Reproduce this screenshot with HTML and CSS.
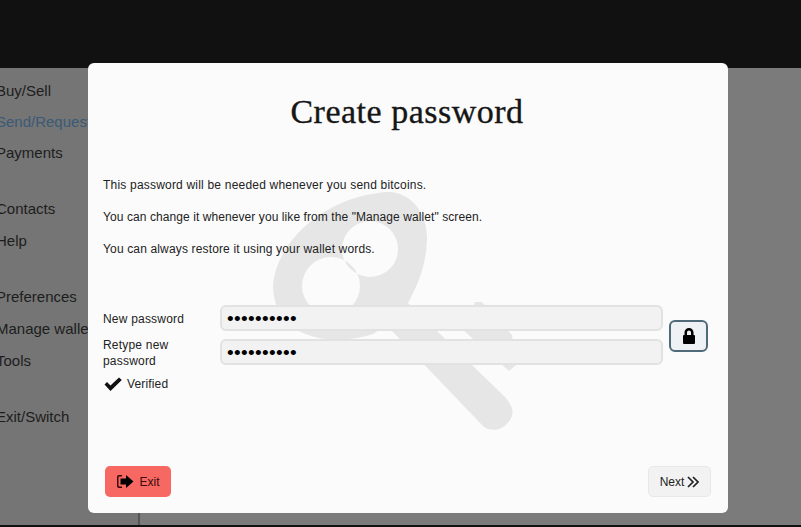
FILE: index.html
```html
<!DOCTYPE html>
<html lang="en">
<head>
<meta charset="utf-8">
<title>Create password</title>
<link rel="stylesheet" href="styles.css">
</head>
<body>
<header class="topbar"></header>
<div class="main">
  <nav class="sidebar">
    <div class="nav-group nav-group-first">
      <a class="nav-item">Buy/Sell</a>
      <a class="nav-item active">Send/Request</a>
      <a class="nav-item">Payments</a>
    </div>
    <div class="nav-group">
      <a class="nav-item">Contacts</a>
      <a class="nav-item">Help</a>
    </div>
    <div class="nav-group">
      <a class="nav-item">Preferences</a>
      <a class="nav-item">Manage wallet</a>
      <a class="nav-item">Tools</a>
    </div>
    <div class="nav-group">
      <a class="nav-item">Exit/Switch</a>
    </div>
  </nav>
</div>
<div class="bottom-line"></div>
<section class="modal">
  <svg class="watermark" viewBox="265 185 260 250" aria-hidden="true">
    <path fill="#e6e6e6" fill-rule="evenodd" d="M273 285C276 245 320 198 385 192C412 190 428 215 427 240C426 265 418 285 408 303L505 397C512 405 515 412 510 420C503 431 490 433 482 425L393 332L384 327L373 334C345 343 310 342 290 325C278 315 273 300 273 285ZM398 249a28 28 0 1 0-56 0a28 28 0 1 0 56 0ZM360 286a29 29 0 1 0-58 0a29 29 0 1 0 58 0Z"/>
    <path fill="#e6e6e6" d="M475 302L482 302L512 335L516 365L509 371L462 329Z"/>
  </svg>
  <h1 class="title">Create password</h1>
  <div class="intro">
    <p class="line-a">This password will be needed whenever you send bitcoins.</p>
    <p class="line-b">You can change it whenever you like from the "Manage wallet" screen.</p>
    <p>You can always restore it using your wallet words.</p>
  </div>
  <div class="form">
    <div class="fields">
      <div class="field">
        <label class="label">New password</label>
        <div class="input">••••••••••</div>
      </div>
      <div class="field">
        <label class="label">Retype new password</label>
        <div class="input">••••••••••</div>
      </div>
    </div>
    <button class="lock" type="button" aria-label="Lock">
      <svg width="14" height="16" viewBox="0 0 14 16"><path fill="#000" fill-rule="evenodd" d="M2.500 7V4.500a4.500 4.500 0 0 1 9 0V7h.5q1 0 1 1v7q0 1-1 1H2q-1 0-1-1V8q0-1 1-1ZM5 7h4V4.500a2 2 0 0 0-4 0Z"/></svg>
    </button>
  </div>
  <div class="verified">
    <svg width="18" height="14" viewBox="0 0 18 14"><path fill="#111" d="M0.500 7.500L3 5L6.500 8.500L15 0.500L17.800 3L6.500 14Z"/></svg>
    <span>Verified</span>
  </div>
  <div class="actions">
    <button class="btn exit" type="button">
      <svg width="18" height="15" viewBox="0 0 18 15"><path fill="#3a0808" d="M6 1H3Q1 1 1 3V12Q1 14 3 14H6V12.500H3.500Q2.500 12.500 2.500 11.500V3.500Q2.500 2.500 3.500 2.500H6Z"/><path fill="#000" d="M4.500 4.500H10V1L17.500 7.500L10 14V10.500H4.500Z"/></svg>
      <span>Exit</span>
    </button>
    <button class="btn next" type="button">
      <span>Next</span>
      <svg width="12" height="12" viewBox="0 0 12 12"><path fill="none" stroke="#222" stroke-width="1.700" d="M1 1L6 6L1 11M6 1L11 6L6 11"/></svg>
    </button>
  </div>
</section>
</body>
</html>
```
FILE: styles.css
```css
* { box-sizing: border-box; }
html, body { margin: 0; height: 100%; }
body {
  width: 801px;
  height: 527px;
  overflow: hidden;
  position: relative;
  display: flex;
  flex-direction: column;
  background: #7b7b7b;
  font-family: "Liberation Sans", Arial, sans-serif;
  color: #222;
}
.topbar { height: 68px; flex: none; background: #111; }
.main { flex: 1; min-height: 0; display: flex; }
.sidebar {
  width: 140px;
  flex: none;
  background: #757575;
  border-right: 2px solid #555;
  padding-top: 7px;
  overflow: hidden;
  white-space: nowrap;
}
.nav-group { margin-bottom: 24px; }
.nav-group-first { margin-bottom: 25px; }
.nav-item {
  display: block;
  height: 32px;
  margin-left: -4px;
  line-height: 32px;
  font-size: 15px;
  color: #1d1d1d;
}
.nav-group-first .nav-item { height: 31px; line-height: 31px; }
.nav-item.active { color: #3a5a76; }
.bottom-line { height: 2px; flex: none; background: #111; }
.modal {
  position: absolute;
  left: 88px;
  top: 63px;
  width: 640px;
  height: 450px;
  background: #fbfbfb;
  border-radius: 6px;
  padding: 0 17px 0 15px;
  display: flex;
  flex-direction: column;
  overflow: hidden;
}
.watermark {
  position: absolute;
  left: 177px;
  top: 122px;
  width: 260px;
  height: 250px;
}
.title {
  position: relative;
  margin: 29px 0 0;
  height: 40px;
  text-align: center;
  font-family: "Liberation Serif", serif;
  font-size: 34px;
  line-height: 40px;
  font-weight: 400;
  letter-spacing: 0.5px;
  -webkit-text-stroke: 0.35px #161616;
  color: #161616;
}
.intro { position: relative; margin-top: 46px; font-size: 12px; letter-spacing: 0.15px; color: #222; }
.intro p { margin: 0 0 18px; line-height: 14px; }
.intro .line-a { letter-spacing: 0.2px; }
.intro .line-b { letter-spacing: 0.08px; }
.form { position: relative; display: flex; align-items: center; margin-top: 31px; }
.fields { flex: 1; display: flex; flex-direction: column; gap: 8px; }
.field { display: flex; align-items: center; height: 26px; }
.label { width: 117px; flex: none; margin-top: 2px; font-size: 12px; line-height: 16px; letter-spacing: 0.2px; color: #222; padding-right: 30px; }
.input {
  width: 443px;
  height: 26px;
  flex: none;
  background: #f2f2f2;
  border: 2px solid #e2e2e2;
  border-radius: 6px;
  padding-left: 5px;
  font-size: 19px;
  line-height: 24px;
  letter-spacing: 0.35px;
  color: #000;
}
.lock {
  width: 40px;
  height: 32px;
  margin-top: 2px;
  margin-left: 6px;
  margin-right: 3px;
  padding: 0;
  display: flex;
  align-items: center;
  justify-content: center;
  background: #eef2f4;
  border: 2px solid #4f6a78;
  border-radius: 6px;
}
.verified {
  position: relative;
  display: flex;
  align-items: center;
  gap: 5px;
  margin-top: 12px;
  padding-left: 1px;
  font-size: 12px;
  letter-spacing: 0.15px;
  color: #222;
}
.actions { margin-top: auto; margin-bottom: 16px; padding-left: 2px; display: flex; justify-content: space-between; }
.btn {
  height: 31px;
  display: flex;
  align-items: center;
  justify-content: center;
  font-family: inherit;
  font-size: 12px;
  border-radius: 5px;
  padding: 0;
}
.exit { width: 66px; gap: 5px; background: #f76863; border: 0; color: #3a0808; }
.next { width: 63px; gap: 3px; background: #f2f2f2; border: 1px solid #e8e8e8; color: #222; }
```
